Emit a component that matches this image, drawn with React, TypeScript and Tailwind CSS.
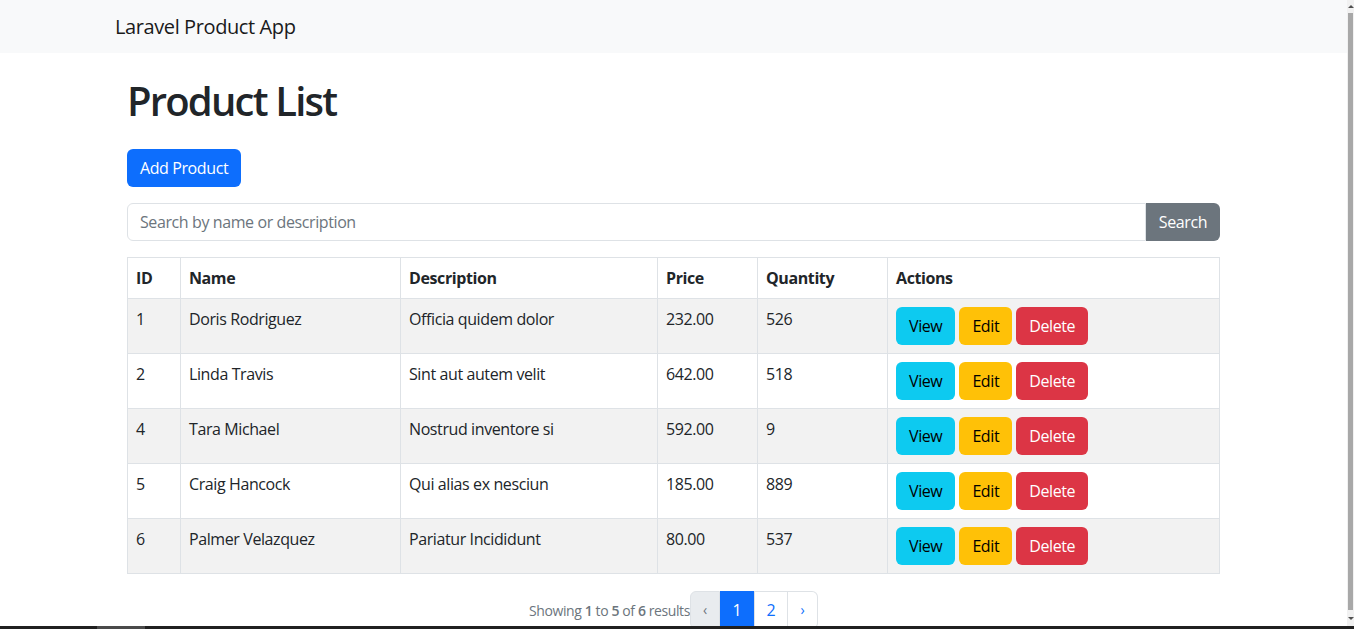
const products = [
  { id: 1, name: "Doris Rodriguez", description: "Officia quidem dolor", price: "232.00", quantity: 526 },
  { id: 2, name: "Linda Travis", description: "Sint aut autem velit", price: "642.00", quantity: 518 },
  { id: 4, name: "Tara Michael", description: "Nostrud inventore si", price: "592.00", quantity: 9 },
  { id: 5, name: "Craig Hancock", description: "Qui alias ex nesciun", price: "185.00", quantity: 889 },
  { id: 6, name: "Palmer Velazquez", description: "Pariatur Incididunt", price: "80.00", quantity: 537 },
];

const font = { fontFamily: '"Open Sans", "Noto Sans", sans-serif' };

export default function App() {
  return (
    <div className="h-[629px] flex flex-col overflow-hidden bg-white text-[#212529] tracking-[-0.025em]" style={font}>
      <div className="flex-1 min-h-0 flex">
        {/* --- Page --- */}
        <div className="flex-1 min-w-0 overflow-hidden">
          <nav className="h-[53px] bg-[#f8f9fa]">
            <div className="w-[1141px] mx-auto px-3 h-full flex items-center">
              <span className="text-xl text-[#1a1a1a]">Laravel Product App</span>
            </div>
          </nav>

          <div className="w-[1141px] mx-auto px-6 pt-6">
            <h1 className="text-[40px] leading-[48px] font-semibold tracking-[-0.045em] mb-6">Product List</h1>

            <button className="h-[38px] px-[13px] rounded-md bg-[#0d6efd] text-white text-base">
              Add Product
            </button>

            <div className="mt-4 flex h-[38px]">
              <input
                placeholder="Search by name or description"
                className="flex-1 px-3 border border-[#dee2e6] rounded-l-md text-base placeholder:text-[#6c757d] outline-none"
              />
              <button className="w-[74px] bg-[#6c757d] text-white text-base rounded-r-md">Search</button>
            </div>

            <table className="mt-4 w-full table-fixed border-collapse text-base">
              <colgroup>
                <col className="w-[53px]" />
                <col className="w-[220px]" />
                <col className="w-[257px]" />
                <col className="w-[100px]" />
                <col className="w-[130px]" />
                <col />
              </colgroup>
              <thead>
                <tr>
                  {["ID", "Name", "Description", "Price", "Quantity", "Actions"].map((h) => (
                    <th key={h} className="border border-[#dee2e6] px-2 h-[41px] text-left font-bold">
                      {h}
                    </th>
                  ))}
                </tr>
              </thead>
              <tbody>
                {products.map((p, i) => (
                  <tr key={p.id} className={i % 2 === 0 ? "bg-[#f2f2f2]" : "bg-white"}>
                    <td className="border border-[#dee2e6] p-2 align-top leading-6">{p.id}</td>
                    <td className="border border-[#dee2e6] p-2 align-top leading-6">{p.name}</td>
                    <td className="border border-[#dee2e6] p-2 align-top leading-6">{p.description}</td>
                    <td className="border border-[#dee2e6] p-2 align-top leading-6">{p.price}</td>
                    <td className="border border-[#dee2e6] p-2 align-top leading-6">{p.quantity}</td>
                    <td className="border border-[#dee2e6] p-2 align-top">
                      <div className="flex gap-1">
                        <button className="h-[38px] px-[13px] rounded-md bg-[#0dcaf0] text-black">View</button>
                        <button className="h-[38px] px-[13px] rounded-md bg-[#ffc107] text-black">Edit</button>
                        <button className="h-[38px] px-[13px] rounded-md bg-[#dc3545] text-white">Delete</button>
                      </div>
                    </td>
                  </tr>
                ))}
              </tbody>
            </table>

            {/* --- Pagination --- */}
            <div className="mt-[17px] flex justify-center items-center">
              <p className="text-sm text-[#6c757d] pt-[2px]">
                Showing <span className="font-semibold">1</span> to <span className="font-semibold">5</span> of{" "}
                <span className="font-semibold">6</span> results
              </p>
              <ul className="flex text-base">
                <li className="h-[38px] w-[30px] flex items-center justify-center border border-[#dee2e6] rounded-l-md bg-[#e9ecef] text-[#6c757d] text-sm">
                  ‹
                </li>
                <li className="h-[38px] w-[34px] flex items-center justify-center border border-[#0d6efd] bg-[#0d6efd] text-white">
                  1
                </li>
                <li className="h-[38px] w-[34px] flex items-center justify-center border border-[#dee2e6] text-[#0d6efd]">
                  2
                </li>
                <li className="h-[38px] w-[30px] flex items-center justify-center border border-l-0 border-[#dee2e6] rounded-r-md text-[#0d6efd] text-sm">
                  ›
                </li>
              </ul>
            </div>
          </div>
        </div>

        {/* --- Scrollbar --- */}
        <div className="w-[7px] bg-[#f1f1f1] flex flex-col items-center">
          <div className="h-[13px] flex items-center justify-center">
            <div className="w-0 h-0 border-l-[3px] border-r-[3px] border-b-[3px] border-l-transparent border-r-transparent border-b-[#505050]" />
          </div>
          <div className="w-[5px] h-[597px] bg-[#a8a8a8]" />
          <div className="flex-1 flex items-center justify-center">
            <div className="w-0 h-0 border-l-[3px] border-r-[3px] border-t-[3px] border-l-transparent border-r-transparent border-t-[#505050]" />
          </div>
        </div>
      </div>

      {/* --- Bottom bar --- */}
      <div className="h-[3px] bg-[#202020] flex">
        <div className="ml-[97px] w-[48px] bg-[#4a4a4a]" />
      </div>
    </div>
  );
}
